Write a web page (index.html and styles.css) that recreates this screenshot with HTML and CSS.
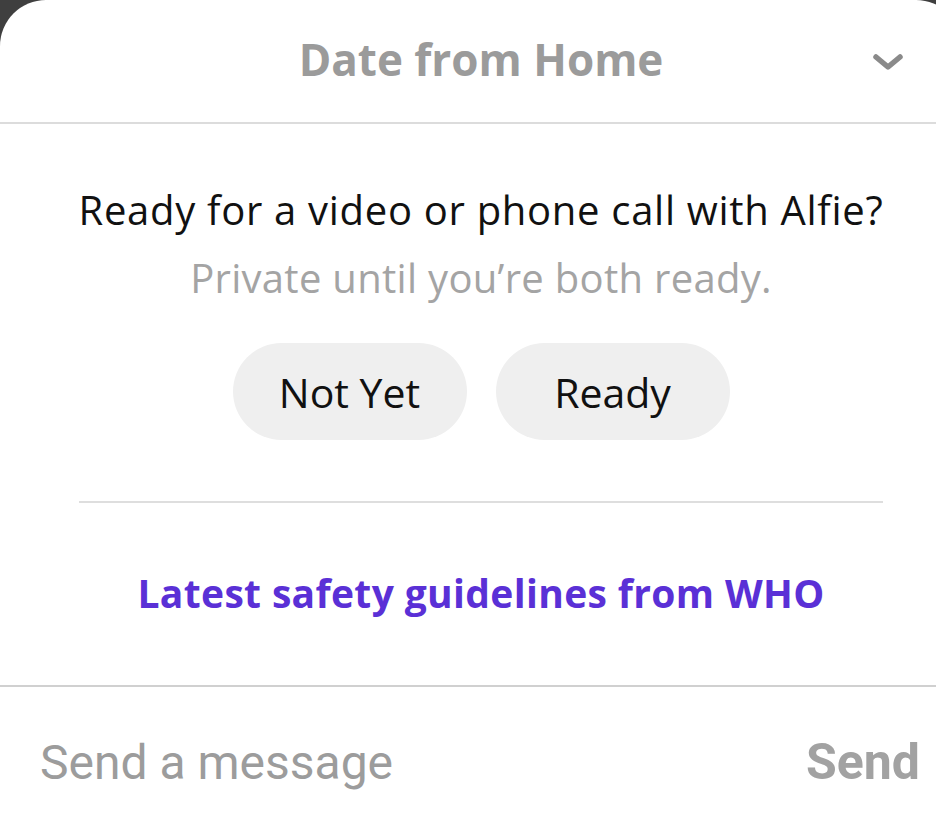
FILE: index.html
```html
<!DOCTYPE html>
<html>
<head>
<meta charset="utf-8">
<link rel="stylesheet" href="styles.css">
</head>
<body>
<div class="card">
  <header class="head">
    <h1 class="title">Date from Home</h1>
    <svg class="chev" width="32" height="20" viewBox="0 0 32 20"><path d="M4 5 L16 15 L28 5" fill="none" stroke="#8a8a8a" stroke-width="5.5" stroke-linecap="round" stroke-linejoin="round"/></svg>
  </header>
  <section class="body">
    <p class="q">Ready for a video or phone call with Alfie?</p>
    <p class="sub">Private until you’re both ready.</p>
    <div class="btns">
      <button class="pill">Not Yet</button>
      <button class="pill">Ready</button>
    </div>
    <hr class="div">
    <a class="link">Latest safety guidelines from WHO</a>
  </section>
  <footer class="compose">
    <span class="ph">Send a message</span>
    <span class="send">Send</span>
  </footer>
</div>
</body>
</html>
```
FILE: styles.css
```css
html, body { margin: 0; padding: 0; }
body {
  width: 936px; height: 827px; overflow: hidden;
  background: #3f3f3f;
  font-family: "Open Sans", "Noto Sans", sans-serif;
}
.card {
  width: 962px; height: 827px;
  background: #fff;
  border-radius: 46px 46px 0 0;
  display: flex; flex-direction: column;
}
.head {
  height: 122px; flex: none;
  border-bottom: 2px solid #dcdcdc;
  display: flex; align-items: center; justify-content: center;
  position: relative;
}
.title {
  margin: 0; padding-bottom: 4px;
  font-size: 44px; font-weight: 700; color: #9b9b9b;
}
.chev { position: absolute; left: 872px; top: 52px; }
.body {
  flex: none;
  display: flex; flex-direction: column; align-items: center;
  padding-top: 62px; height: 563px;
  border-bottom: 2px solid #d0d0d0;
  box-sizing: border-box;
  width: 936px;
}
.q { margin: 0 0 0 26px; font-size: 40px; letter-spacing: 0.7px; color: #111; line-height: 48px; }
.sub { margin: 20px 0 0 26px; font-size: 40px; letter-spacing: 0.3px; color: #a4a4a4; line-height: 48px; }
.btns { display: flex; gap: 29px; margin: 41px 0 0 26px; }
.pill {
  width: 234px; height: 97px; border: none; border-radius: 49px;
  background: #efefef; font-family: inherit; font-size: 41px; color: #111;
  padding: 0;
}
.div { width: 804px; margin: 61px 0 0 26px; border: none; border-top: 2px solid #dedede; }
.link { margin: 66px 0 0 26px; font-size: 39px; letter-spacing: 0.35px; font-weight: 700; color: #5a30d6; line-height: 48px; }
.compose {
  flex: none;
  width: 936px; display: flex; justify-content: space-between; align-items: center;
  padding: 0 16px 0 40px; box-sizing: border-box; height: 150px;
}
.ph { font-family: "Roboto", sans-serif; font-size: 48px; color: #9c9c9c; }
.send { font-family: "Roboto", sans-serif; font-size: 50px; font-weight: 700; color: #a2a2a2; }
```
